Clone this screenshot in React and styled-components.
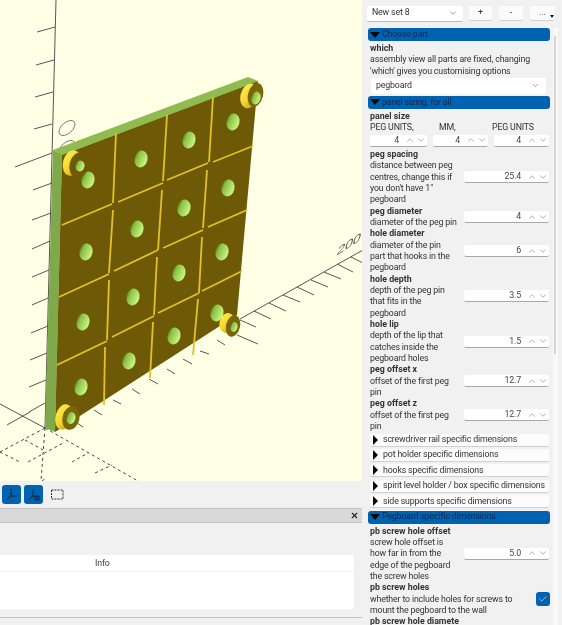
import React from 'react';
import styled, { createGlobalStyle } from 'styled-components';
import { ChevronUp, ChevronDown, Check, X } from 'lucide-react';

const Global = createGlobalStyle`
  html, body { margin: 0; padding: 0; background: #f1f1f1; }
  #root { width: 562px; height: 625px; overflow: hidden; }
`;

const Page = styled.div`
  display: grid;
  grid-template-columns: 363px 199px;
  width: 562px;
  height: 625px;
  overflow: hidden;
  background: #f1f1f1;
  font-family: Roboto, "Liberation Sans", sans-serif;
  font-size: 8.8px;
  letter-spacing: -0.16px;
  line-height: 11.33px;
  color: #333;
  filter: blur(0.3px);
`;

const Left = styled.div`
  display: flex;
  flex-direction: column;
  min-width: 0;
`;

const Viewport = styled.svg`
  display: block;
  width: 362px;
  height: 481px;
  flex: none;
  background: #ffffe5;
`;

const Toolbar = styled.div`
  display: flex;
  align-items: center;
  gap: 3px;
  height: 27px;
  padding: 0 0 0 2px;
  flex: none;
`;

const ToolButton = styled.div`
  width: 19px;
  height: 19px;
  border-radius: 3px;
  background: ${p => (p.$active ? '#0063b1' : 'transparent')};
  display: flex;
  align-items: center;
  justify-content: center;
  margin-left: ${p => (p.$active ? 0 : '2px')};
`;

const ConsoleBar = styled.div`
  display: flex;
  align-items: center;
  justify-content: flex-end;
  width: 362px;
  height: 15px;
  box-sizing: border-box;
  padding-right: 3px;
  background: #d9d9d9;
  border-top: 1px solid #c4c4c4;
  border-bottom: 1px solid #c4c4c4;
  color: #222;
  flex: none;
`;

const ConsoleBody = styled.div`
  width: 362px;
  box-sizing: border-box;
  padding: 32px 8px 8px 0;
  border-bottom: 1px solid #c4c4c4;
  flex: none;
`;

const Table = styled.div`
  background: #fff;
  border-radius: 0 3px 3px 0;
  height: 54px;
`;

const TableHead = styled.div`
  height: 17px;
  box-sizing: border-box;
  padding-left: 95px;
  border-bottom: 1px solid #f2f2f2;
  line-height: 17px;
  color: #444;
`;

const Right = styled.div`
  position: relative;
  display: flex;
  flex-direction: column;
  min-width: 0;
  overflow: hidden;
`;

const TopBar = styled.div`
  display: flex;
  align-items: center;
  height: 28px;
  box-sizing: border-box;
  padding: 0 0 1px 4px;
  flex: none;
`;

const SetCombo = styled.div`
  display: flex;
  align-items: center;
  justify-content: space-between;
  width: 98px;
  height: 16px;
  box-sizing: border-box;
  padding: 0 5px 0 5px;
  margin-right: 6px;
  background: #fff;
  border-bottom: 1px solid #bcbcbc;
  border-radius: 2px;
`;

const TopButton = styled.div`
  position: relative;
  width: ${p => p.$w || 24}px;
  height: 15px;
  margin-right: 7px;
  box-sizing: border-box;
  background: #fbfbfb;
  border-bottom: 1px solid #d2d2d2;
  border-radius: 2px;
  text-align: center;
  line-height: 13px;
`;

const MenuArrow = styled.span`
  position: absolute;
  right: 1px;
  bottom: 2px;
  border-left: 2.5px solid transparent;
  border-right: 2.5px solid transparent;
  border-top: 3px solid #111;
`;

const Params = styled.div`
  width: 182px;
  margin-left: 5px;
  display: flex;
  flex-direction: column;
`;

const GroupHeader = styled.div`
  display: flex;
  align-items: center;
  gap: 2px;
  height: 13px;
  box-sizing: border-box;
  padding-left: 2px;
  background: #0063b1;
  border-radius: 3px;
  color: #0b2b55;
  margin-bottom: 2px;
  flex: none;
`;

const DownTriangle = styled.span`
  display: inline-block;
  border-left: 5.5px solid transparent;
  border-right: 5.5px solid transparent;
  border-top: 6px solid #0a0a0a;
`;

const Collapsed = styled.div`
  display: flex;
  align-items: center;
  gap: 5px;
  height: 13px;
  width: 179px;
  box-sizing: border-box;
  margin: 0 0 2.4px 2px;
  padding-left: 3px;
  background: #fcfcfc;
  border-bottom: 1px solid #d0d0d0;
  border-radius: 2px;
  white-space: nowrap;
  flex: none;
`;

const RightTriangle = styled.span`
  display: inline-block;
  border-top: 5.5px solid transparent;
  border-bottom: 5.5px solid transparent;
  border-left: 5.5px solid #0a0a0a;
`;

const Section = styled.div`
  padding-left: 2px;
  width: 179px;
`;

const Name = styled.div`
  font-weight: 700;
  letter-spacing: 0;
  white-space: nowrap;
  overflow: hidden;
`;

const Desc = styled.div`
  white-space: pre;
`;

const Param = styled.div`
  display: flex;
  align-items: center;
  justify-content: space-between;
`;

const ParamText = styled.div`
  width: ${p => p.$w || 89}px;
  flex: none;
`;

const Spin = styled.div`
  display: flex;
  align-items: center;
  justify-content: flex-end;
  gap: 1px;
  width: ${p => p.$w || 85}px;
  height: 12px;
  box-sizing: border-box;
  padding-right: 1px;
  background: #fff;
  border-bottom: 1px solid #a8a8a8;
  border-radius: 2px;
  color: #444;
`;

const SpinValue = styled.span`
  margin-right: 5px;
`;

const Combo = styled.div`
  display: flex;
  align-items: center;
  justify-content: space-between;
  height: 16px;
  box-sizing: border-box;
  margin: 1px 3px 2px 1px;
  padding: 0 6px 0 5px;
  background: #fff;
  border-radius: 2px;
`;

const Triple = styled.div`
  display: flex;
  justify-content: space-between;
  padding-bottom: 2.3px;
`;

const TripleCell = styled.div`
  display: flex;
  flex-direction: column;
  width: ${p => p.$w}px;
`;

const TripleLabel = styled.span`
  height: 12.5px;
  margin-left: ${p => p.$x || 0}px;
`;

const Spacer = styled.div`
  height: 1.4px;
  flex: none;
`;

const CheckBox = styled.div`
  width: 14px;
  height: 14px;
  border-radius: 3px;
  background: #0063b1;
  display: flex;
  align-items: center;
  justify-content: center;
  margin-right: -1px;
  color: #dbe9f5;
`;

const ScrollTrack = styled.div`
  position: absolute;
  left: 190px;
  top: 28px;
  bottom: 0;
  width: 5px;
  background: #f9f9f9;
`;

const ScrollThumb = styled.div`
  position: absolute;
  left: 1px;
  top: 8px;
  width: 2px;
  height: 318px;
  background: #d4d4d4;
`;

const Chevrons = () => (
  <>
    <ChevronUp size={10} strokeWidth={1.1} color="#555" />
    <ChevronDown size={10} strokeWidth={1.1} color="#555" />
  </>
);

const Spinner = ({ value, w }) => (
  <Spin $w={w}>
    <SpinValue>{value}</SpinValue>
    <Chevrons />
  </Spin>
);

const NumParam = ({ name, desc, value }) => (
  <Param>
    <ParamText>
      <Name>{name}</Name>
      <Desc>{desc}</Desc>
    </ParamText>
    <Spinner value={value} />
  </Param>
);

const sizing = [
  ['peg spacing', "distance between peg\ncentres, change this if\nyou don't have 1\"\npegboard", '25.4'],
  ['peg diameter', 'diameter of the peg pin', '4'],
  ['hole diameter', 'diameter of the pin\npart that hooks in the\npegboard', '6'],
  ['hole depth', 'depth of the peg pin\nthat fits in the\npegboard', '3.5'],
  ['hole lip', 'depth of the lip that\ncatches inside the\npegboard holes', '1.5'],
  ['peg offset x', 'offset of the first peg\npin', '12.7'],
  ['peg offset z', 'offset of the first peg\npin', '12.7'],
];

const collapsed = [
  'screwdriver rail specific dimensions',
  'pot holder specific dimensions',
  'hooks specific dimensions',
  'spirit level holder / box specific dimensions',
  'side supports specific dimensions',
];

const yAxisTicks = [
  [55, 27, 37, 32], [54, 60, 36, 65], [53, 92, 35, 97], [52, 124, 34, 129], [52, 153, 15, 167],
  [52, 183, 33, 190], [51, 213, 32, 220], [50, 241, 32, 249], [49, 270, 32, 277], [48, 298, 32, 305],
  [48, 326, 31, 333], [47, 353, 30, 360], [46, 380, 29, 387], [45, 403, 29, 412], [30, 412, 7, 425],
];

const xTicks = [
  [77, 423, 83, 427], [94, 410, 102, 415], [113, 400, 121, 404], [132, 389, 140, 394], [149, 379, 158, 384],
  [167, 369, 175, 374], [183, 359, 192, 364], [200, 351, 209, 354], [217, 340, 225, 345],
  [237, 335, 258, 344], [240, 320, 256, 327], [254, 311, 271, 319], [269, 303, 286, 311], [283, 295, 300, 302],
  [297, 287, 314, 295], [311, 280, 328, 287], [324, 272, 341, 279], [337, 264, 353, 272], [351, 257, 363, 263],
];

const dashed = [
  [45, 428, 138, 481], [45, 428, 41, 481], [45, 428, 0, 452], [25, 440, 43, 450], [0, 452, 20, 462],
  [28, 462, 65, 442], [72, 462, 88, 453], [95, 473, 112, 465], [42, 481, 46, 478],
];

const tileLines = [
  [62, 225, 112, 204], [118, 202, 163, 183], [167, 180, 208, 163], [213, 162, 253, 146],
  [59, 297, 109, 274], [114, 271, 158, 250], [163, 248, 203, 230], [208, 227, 247, 210],
  [57, 365, 107, 341], [112, 337, 154, 316], [158, 313, 199, 293], [202, 291, 242, 271],
  [116, 133, 113, 203], [113, 210, 109, 273], [109, 280, 107, 340], [105, 347, 104, 405],
  [167, 115, 163, 181], [162, 190, 158, 250], [157, 257, 154, 315], [153, 322, 150, 378],
  [213, 97, 209, 162], [207, 170, 203, 228], [202, 237, 199, 293], [198, 299, 193, 355],
];

const holes = [
  [88, 180], [141, 159], [189, 140], [233, 122],
  [86, 252], [137, 229], [184, 208], [228, 188],
  [83, 322], [133, 297], [179, 273], [222, 252],
  [81, 387], [129, 361], [174, 336], [217, 313],
];

const bosses = [
  { y: [72, 163, 9, 13], d: [79, 165, 9.5, 13], h: [80, 166, 4.5, 5.5], c: '#6e5a06' },
  { y: [249, 96, 8.5, 12.5], d: [255.5, 95, 7.5, 12], h: [256, 98, 4.5, 6.5], c: '#7a6508' },
  { y: [227, 323, 7.5, 10], d: [233, 326, 7, 11], h: [234, 327, 3.5, 5], c: '#7a6508' },
  { y: [64, 417, 8.5, 13], d: [71, 418, 8.5, 12], h: [71, 418, 4.5, 6], c: '#7a6508' },
];

const E = ({ v, fill }) => (
  <ellipse cx={v[0]} cy={v[1]} rx={v[2]} ry={v[3]} fill={fill} transform={`rotate(14 ${v[0]} ${v[1]})`} />
);

const Scene = () => (
  <Viewport viewBox="0 0 362 481">
    <defs>
      <linearGradient id="hole" x1="0" x2="1" y1="0" y2="0.2">
        <stop offset="0" stopColor="#4a6f14" />
        <stop offset="0.3" stopColor="#8cc044" />
        <stop offset="1" stopColor="#c6f480" />
      </linearGradient>
      <linearGradient id="boss" x1="0" x2="1" y1="0.1" y2="0.9">
        <stop offset="0" stopColor="#fff04c" />
        <stop offset="0.55" stopColor="#f3d52c" />
        <stop offset="1" stopColor="#b8981a" />
      </linearGradient>
    </defs>
    <g stroke="#444" strokeWidth="0.9" fill="none">
      <path d="M56 0 L45 428" />
      <path d="M0 404 L45 428" />
      <path d="M240 319 L363 250" />
      {yAxisTicks.concat(xTicks).map((l, i) => (
        <line key={i} x1={l[0]} y1={l[1]} x2={l[2]} y2={l[3]} />
      ))}
    </g>
    <g stroke="#333" strokeWidth="0.9" fill="none" strokeDasharray="3 3">
      {dashed.map((l, i) => (
        <line key={i} x1={l[0]} y1={l[1]} x2={l[2]} y2={l[3]} />
      ))}
    </g>
    <g stroke="#777" strokeWidth="0.9" fill="none">
      <ellipse cx="67" cy="128" rx="9.5" ry="5.5" transform="rotate(-42 67 128)" />
      <ellipse cx="67" cy="148" rx="9.5" ry="5.5" transform="rotate(-42 67 148)" />
    </g>
    <text
      x="0"
      y="0"
      fontFamily="Liberation Sans, sans-serif"
      fontSize="15"
      letterSpacing="0"
      fill="#555"
      transform="matrix(0.95 -0.62 -0.25 0.85 336 256)"
    >
      200
    </text>
    <polygon points="53,150 248,77 258,81 62,155" fill="#8fbb50" />
    <polygon points="53,150 62,155 55,432 45,428" fill="#7fa94a" />
    <polygon points="62,155 258,81 237,315 55,432" fill="#6e5a06" />
    {tileLines.map((l, i) => (
      <line key={i} x1={l[0]} y1={l[1]} x2={l[2]} y2={l[3]} stroke="#e3c128" strokeWidth="1.8" />
    ))}
    {holes.map((h, i) => (
      <ellipse key={i} cx={h[0]} cy={h[1]} rx="6.5" ry="8.5" fill="url(#hole)" transform={`rotate(14 ${h[0]} ${h[1]})`} />
    ))}
    {bosses.map((b, i) => (
      <g key={i}>
        <E v={b.y} fill="url(#boss)" />
        <E v={b.d} fill={b.c} />
        <E v={b.h} fill="url(#hole)" />
      </g>
    ))}
  </Viewport>
);

const AxisIcon = ({ scale }) => (
  <svg width="15" height="15" viewBox="0 0 15 15" fill="none" stroke="#0c2748" strokeWidth="1">
    <path d="M7 2 V9 L2 13 M7 9 H13" />
    {scale && <path d="M9 9 V13 M11 9 V13 M13 9 V13 M9 13 H13" />}
  </svg>
);

const SelectIcon = () => (
  <svg width="13" height="11" viewBox="0 0 13 11" fill="none" stroke="#333" strokeWidth="1" strokeDasharray="2 1">
    <rect x="0.5" y="1" width="11.5" height="9" />
  </svg>
);

export default function App() {
  return (
    <Page>
      <Global />
      <Left>
        <Scene />
        <Toolbar>
          <ToolButton $active><AxisIcon /></ToolButton>
          <ToolButton $active><AxisIcon scale /></ToolButton>
          <ToolButton><SelectIcon /></ToolButton>
        </Toolbar>
        <ConsoleBar>
          <X size={9} strokeWidth={3} />
        </ConsoleBar>
        <ConsoleBody>
          <Table>
            <TableHead>Info</TableHead>
          </Table>
        </ConsoleBody>
      </Left>
      <Right>
        <TopBar>
          <SetCombo>
            New set 8
            <ChevronDown size={10} strokeWidth={1.4} color="#555" />
          </SetCombo>
          <TopButton>+</TopButton>
          <TopButton>-</TopButton>
          <TopButton $w={26}>...<MenuArrow /></TopButton>
        </TopBar>
        <Params>
          <GroupHeader><DownTriangle />Choose part</GroupHeader>
          <Section>
            <Name>which</Name>
            <Desc>{"assembly view all parts are fixed, changing\n'which' gives you customising options"}</Desc>
            <Combo>
              pegboard
              <ChevronDown size={9} strokeWidth={1.4} color="#555" />
            </Combo>
          </Section>
          <GroupHeader><DownTriangle />panel sizing, for all</GroupHeader>
          <Section>
            <Name>panel size</Name>
            <Triple>
              <TripleCell $w={57}><TripleLabel>PEG UNITS,</TripleLabel><Spinner value="4" w={57} /></TripleCell>
              <TripleCell $w={55}><TripleLabel $x={6}>MM,</TripleLabel><Spinner value="4" w={55} /></TripleCell>
              <TripleCell $w={55}><TripleLabel $x={-2}>PEG UNITS</TripleLabel><Spinner value="4" w={55} /></TripleCell>
            </Triple>
            {sizing.map(([n, d, v]) => (
              <NumParam key={n} name={n} desc={d} value={v} />
            ))}
          </Section>
          <Spacer />
          {collapsed.map(t => (
            <Collapsed key={t}><RightTriangle />{t}</Collapsed>
          ))}
          <GroupHeader><DownTriangle />Pegboard specific dimensions</GroupHeader>
          <Section>
            <NumParam
              name="pb screw hole offset"
              desc={'screw hole offset is\nhow far in from the\nedge of the pegboard\nthe screw holes'}
              value="5.0"
            />
            <Param>
              <ParamText $w={165}>
                <Name>pb screw holes</Name>
                <Desc>{'whether to include holes for screws to\nmount the pegboard to the wall'}</Desc>
              </ParamText>
              <CheckBox><Check size={10} strokeWidth={1.6} /></CheckBox>
            </Param>
            <ParamText>
              <Name>pb screw hole diameter</Name>
            </ParamText>
          </Section>
        </Params>
        <ScrollTrack><ScrollThumb /></ScrollTrack>
      </Right>
    </Page>
  );
}
